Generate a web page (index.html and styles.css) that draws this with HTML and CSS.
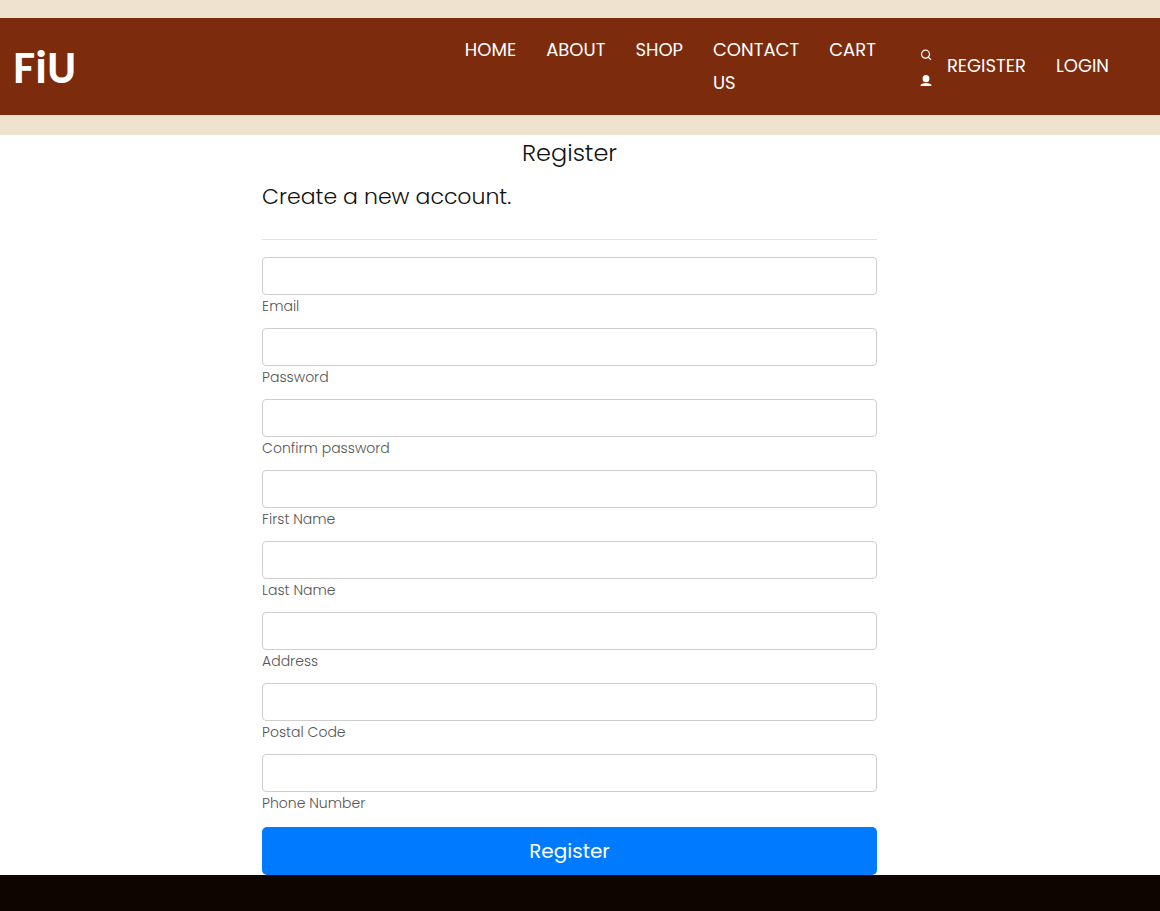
FILE: index.html
```html
<!DOCTYPE html>
<html lang="en">
<head>
<meta charset="utf-8">
<meta name="viewport" content="width=device-width, initial-scale=1">
<title>Register - FiU</title>
<link rel="stylesheet" href="styles.css">
</head>
<body>
<header class="site-header">
  <div class="navbar">
    <a class="logo" href="#">FiU</a>
    <nav class="menu" aria-label="Main">
      <a href="#">HOME</a>
      <a href="#">ABOUT</a>
      <a href="#">SHOP</a>
      <a class="contact" href="#">CONTACT US</a>
      <a href="#">CART</a>
    </nav>
    <div class="tools">
      <a href="#" aria-label="Search"><svg viewBox="0 0 12 12" width="12" height="12"><circle cx="5.500" cy="5.200" r="4" fill="none" stroke="currentColor" stroke-width="1.200"/><path d="M8.300 8.200l2.700 2.600" stroke="currentColor" stroke-width="1.400"/></svg></a>
      <a href="#" aria-label="Profile"><svg viewBox="0 0 12 12" width="12" height="12"><ellipse cx="6" cy="3.700" rx="3.400" ry="3.600" fill="currentColor"/><path d="M.5 11V10.500C.5 9.100 3 8.100 6 8.100s5.500 1 5.500 2.400v.5z" fill="currentColor"/></svg></a>
    </div>
    <nav class="account" aria-label="Account">
      <a href="#">REGISTER</a>
      <a href="#">LOGIN</a>
    </nav>
  </div>
</header>
<main class="content">
  <h1>Register</h1>
  <form class="form">
    <h2>Create a new account.</h2>
    <hr>
    <div class="field"><input id="email" type="email"><label for="email">Email</label></div>
    <div class="field"><input id="password" type="password"><label for="password">Password</label></div>
    <div class="field"><input id="confirm" type="password"><label for="confirm">Confirm password</label></div>
    <div class="field"><input id="first" type="text"><label for="first">First Name</label></div>
    <div class="field"><input id="last" type="text"><label for="last">Last Name</label></div>
    <div class="field"><input id="address" type="text"><label for="address">Address</label></div>
    <div class="field"><input id="postal" type="text"><label for="postal">Postal Code</label></div>
    <div class="field"><input id="phone" type="tel"><label for="phone">Phone Number</label></div>
    <button class="submit" type="submit">Register</button>
  </form>
</main>
<footer class="site-footer"></footer>
</body>
</html>
```
FILE: styles.css
```css
* { box-sizing: border-box; }

body {
  display: flex;
  flex-direction: column;
  min-height: 100vh;
  margin: 0;
  background: #fff;
  color: #111;
  font-family: Poppins, Inter, sans-serif;
}

.site-header {
  padding: 18px 0 20px;
  background: #efe3d0;
}

.navbar {
  display: flex;
  align-items: flex-start;
  padding: 15px 51px 10px 13px;
  background: #7d2b0d;
  color: #fff;
}

.navbar a {
  color: inherit;
  text-decoration: none;
}

.logo {
  margin-right: auto;
  font-size: 42px;
  font-weight: 600;
  line-height: 72px;
}

.menu, .account {
  display: flex;
  gap: 30px;
  font-size: 18px;
  line-height: 33px;
}

.contact { width: min-content; }

.tools {
  display: flex;
  flex-direction: column;
  gap: 14px;
  margin: 16px 15px 0 44px;
}

.tools svg { display: block; }

.account { margin-top: 16px; }

.content {
  width: 53%;
  margin: 0 auto;
  padding-right: 21px;
  box-sizing: content-box;
}

h1, h2 { font-weight: 300; }

h1 {
  margin: 0;
  font-size: 24px;
  line-height: 36px;
  text-align: center;
}

h2 {
  margin: 8px 0 24px;
  font-size: 22px;
  line-height: 36px;
}

hr {
  margin: 0 0 17px;
  border: 0;
  border-top: 1px solid #e2e2e2;
}

.field {
  display: flex;
  flex-direction: column;
  margin-bottom: 12px;
}

.field input {
  width: 100%;
  height: 38px;
  padding: 6px 12px;
  border: 1px solid #cecece;
  border-radius: 4px;
  background: #fff;
  font: inherit;
}

.field label {
  padding-top: 2px;
  color: #555;
  font-size: 14px;
  font-weight: 300;
  line-height: 19px;
}

.submit {
  display: block;
  width: 100%;
  height: 48px;
  margin-top: 14px;
  border: 0;
  border-radius: 5px;
  background: #007bff;
  color: #fff;
  font: inherit;
  font-size: 20px;
}

.site-footer {
  flex: 1;
  min-height: 36px;
  background: #0f0500;
}
```
